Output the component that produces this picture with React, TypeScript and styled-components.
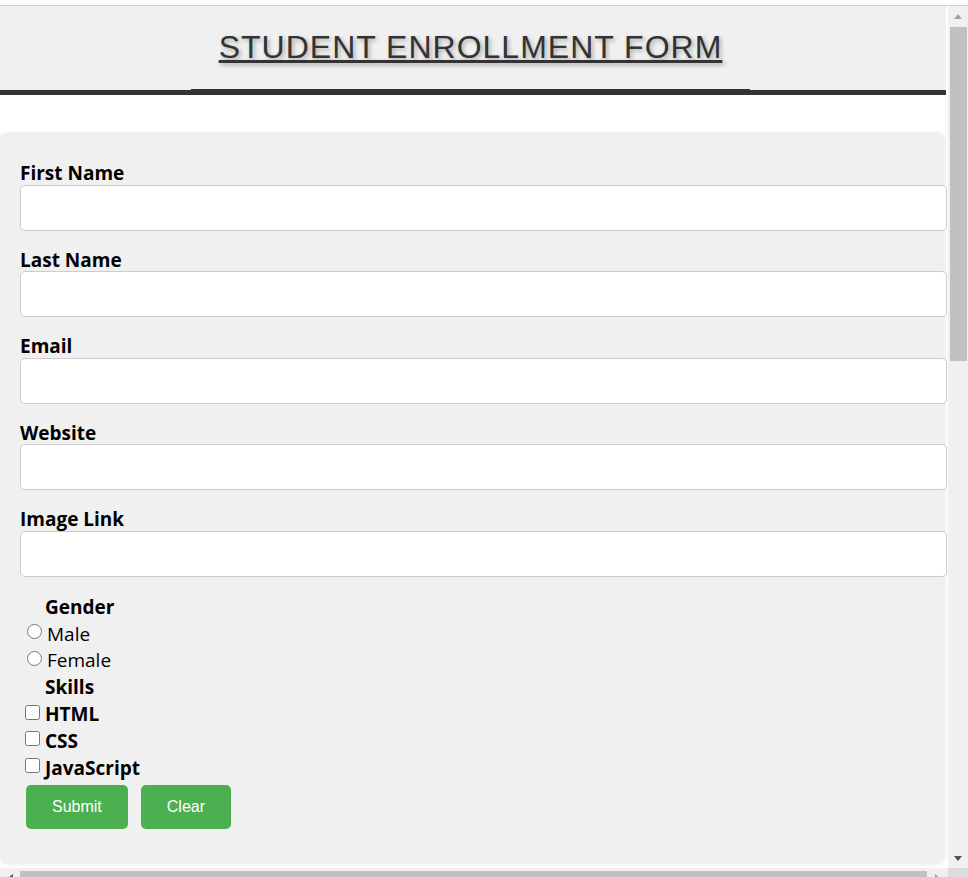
import React from "react";
import styled, { createGlobalStyle } from "styled-components";

const GlobalStyle = createGlobalStyle`
  html, body {
    margin: 0;
    padding: 0;
    background: #fff;
    overflow: hidden;
  }
  body {
    font-family: "Open Sans", "Noto Sans", sans-serif;
    color: #000;
  }
`

const Window = styled.div`
  height: 877px;
  padding-top: 5px;
  box-sizing: border-box;
  overflow: hidden;
`

const Frame = styled.div`
  display: grid;
  grid-template-columns: 948px 20px;
  grid-template-rows: 862px 20px;
  border-top: 1px solid #cfcfcf;
`

const Page = styled.div`
  background: #fff;
  overflow: hidden;
`

const Header = styled.header`
  width: 946px;
  box-sizing: border-box;
  padding: 23px 5px 0 0;
  background: #f0f0f0;
  border-bottom: 5px solid #333;
`

const Title = styled.h1`
  margin: 0;
  font-family: "Liberation Sans", Arial, sans-serif;
  font-size: 32px;
  font-weight: normal;
  line-height: 37px;
  letter-spacing: 1px;
  text-align: center;
  color: #333;
  text-decoration: underline;
  text-shadow: 2px 2px 4px rgba(0, 0, 0, 0.3);
`

const TitleRule = styled.div`
  width: 559px;
  height: 1px;
  margin: 23px auto 0;
  background: #333;
`

const Card = styled.form`
  width: 945px;
  box-sizing: border-box;
  margin-top: 37px;
  padding: 27px 20px 33px;
  background: #f0f0f0;
  border-radius: 8px;
  box-shadow: 0 2px 4px rgba(0, 0, 0, 0.1);
`

const FieldLabel = styled.label`
  display: block;
  padding-top: 4px;
  font-size: 19px;
  font-weight: 700;
  line-height: 21.5px;
`

const TextInput = styled.input`
  display: block;
  width: 100%;
  height: 24px;
  margin: 0 0 15px;
  padding: 10px;
  border: 1px solid #ccc;
  border-radius: 5px;
  background: #fff;
  font-size: 16px;
  outline: none;
`

const GroupTitle = styled.div`
  height: 26.8px;
  box-sizing: border-box;
  padding: 4px 0 0 25px;
  font-size: 19px;
  font-weight: 700;
  line-height: 22.8px;
`

const Option = styled.label<{ $bold?: boolean }>`
  display: flex;
  align-items: center;
  height: 26.8px;
  font-size: 19px;
  font-weight: ${p => (p.$bold ? 700 : 400)};
`

const OptionText = styled.span`
  padding-top: 4px;
  line-height: 22px;
`

const Radio = styled.input.attrs({ type: "radio" })`
  width: 15px;
  height: 15px;
  margin: 0 5px 0 7px;
`

const Checkbox = styled.input.attrs({ type: "checkbox" })`
  width: 15px;
  height: 15px;
  margin: 0 5px 0 5px;
`

const ActionBar = styled.div`
  display: flex;
  gap: 13px;
  margin-top: 6px;
  padding-left: 6px;
`

const Button = styled.button`
  height: 44px;
  padding: 0 26px;
  border: 0;
  border-radius: 5px;
  background: #4caf50;
  color: #fff;
  font-family: "Liberation Sans", Arial, sans-serif;
  font-size: 16px;
`

const VScroll = styled.div`
  display: flex;
  flex-direction: column;
  background: #f0f0f0;
`

const HScroll = styled.div`
  display: flex;
  background: #f0f0f0;
`

const Corner = styled.div`
  background: #dcdcdc;
`

const ScrollButton = styled.div<{ $size: number; $grow?: boolean }>`
  flex: ${p => (p.$grow ? "1" : "none")};
  flex-basis: ${p => p.$size}px;
  display: flex;
  align-items: center;
  justify-content: center;
`

const TrackSpace = styled.div`
  flex: 1;
`

const VThumb = styled.div`
  height: 334px;
  margin: 0 1px 0 2px;
  background: #c1c1c1;
`

const HThumb = styled.div`
  flex: none;
  width: 907px;
  margin: 3px 0 2px;
  background: #c1c1c1;
`

type Dir = "up" | "down" | "left" | "right"

const Arrow = styled.span<{ $dir: Dir; $dim?: boolean }>`
  width: 0;
  height: 0;
  border-style: solid;
  border-color: transparent;
  ${p => {
    const c = p.$dim ? "#a3a3a3" : "#505050"
    switch (p.$dir) {
      case "up":
        return `border-width: 0 4.5px 5px; border-bottom-color: ${c};`
      case "down":
        return `border-width: 5px 4.5px 0; border-top-color: ${c};`
      case "left":
        return `border-width: 4.5px 5px 4.5px 0; border-right-color: ${c};`
      default:
        return `border-width: 4.5px 0 4.5px 5px; border-left-color: ${c};`
    }
  }}
`

const fields = ["First Name", "Last Name", "Email", "Website", "Image Link"]
const skills = ["HTML", "CSS", "JavaScript"]

export default function App() {
  return (
    <Window>
      <GlobalStyle />
      <Frame>
        <Page>
          <Header>
            <Title>STUDENT ENROLLMENT FORM</Title>
            <TitleRule />
          </Header>
          <Card onSubmit={e => e.preventDefault()}>
            {fields.map(f => (
              <div key={f}>
                <FieldLabel>{f}</FieldLabel>
                <TextInput type="text" />
              </div>
            ))}
            <GroupTitle>Gender</GroupTitle>
            <Option>
              <Radio name="gender" />
              <OptionText>Male</OptionText>
            </Option>
            <Option>
              <Radio name="gender" />
              <OptionText>Female</OptionText>
            </Option>
            <GroupTitle>Skills</GroupTitle>
            {skills.map(s => (
              <Option key={s} $bold>
                <Checkbox />
                <OptionText>{s}</OptionText>
              </Option>
            ))}
            <ActionBar>
              <Button type="submit">Submit</Button>
              <Button type="reset">Clear</Button>
            </ActionBar>
          </Card>
        </Page>
        <VScroll>
          <ScrollButton $size={21}>
            <Arrow $dir="up" $dim />
          </ScrollButton>
          <VThumb />
          <TrackSpace />
          <ScrollButton $size={20}>
            <Arrow $dir="down" />
          </ScrollButton>
        </VScroll>
        <HScroll>
          <ScrollButton $size={20}>
            <Arrow $dir="left" />
          </ScrollButton>
          <HThumb />
          <ScrollButton $size={21} $grow>
            <Arrow $dir="right" $dim />
          </ScrollButton>
        </HScroll>
        <Corner />
      </Frame>
    </Window>
  )
}
